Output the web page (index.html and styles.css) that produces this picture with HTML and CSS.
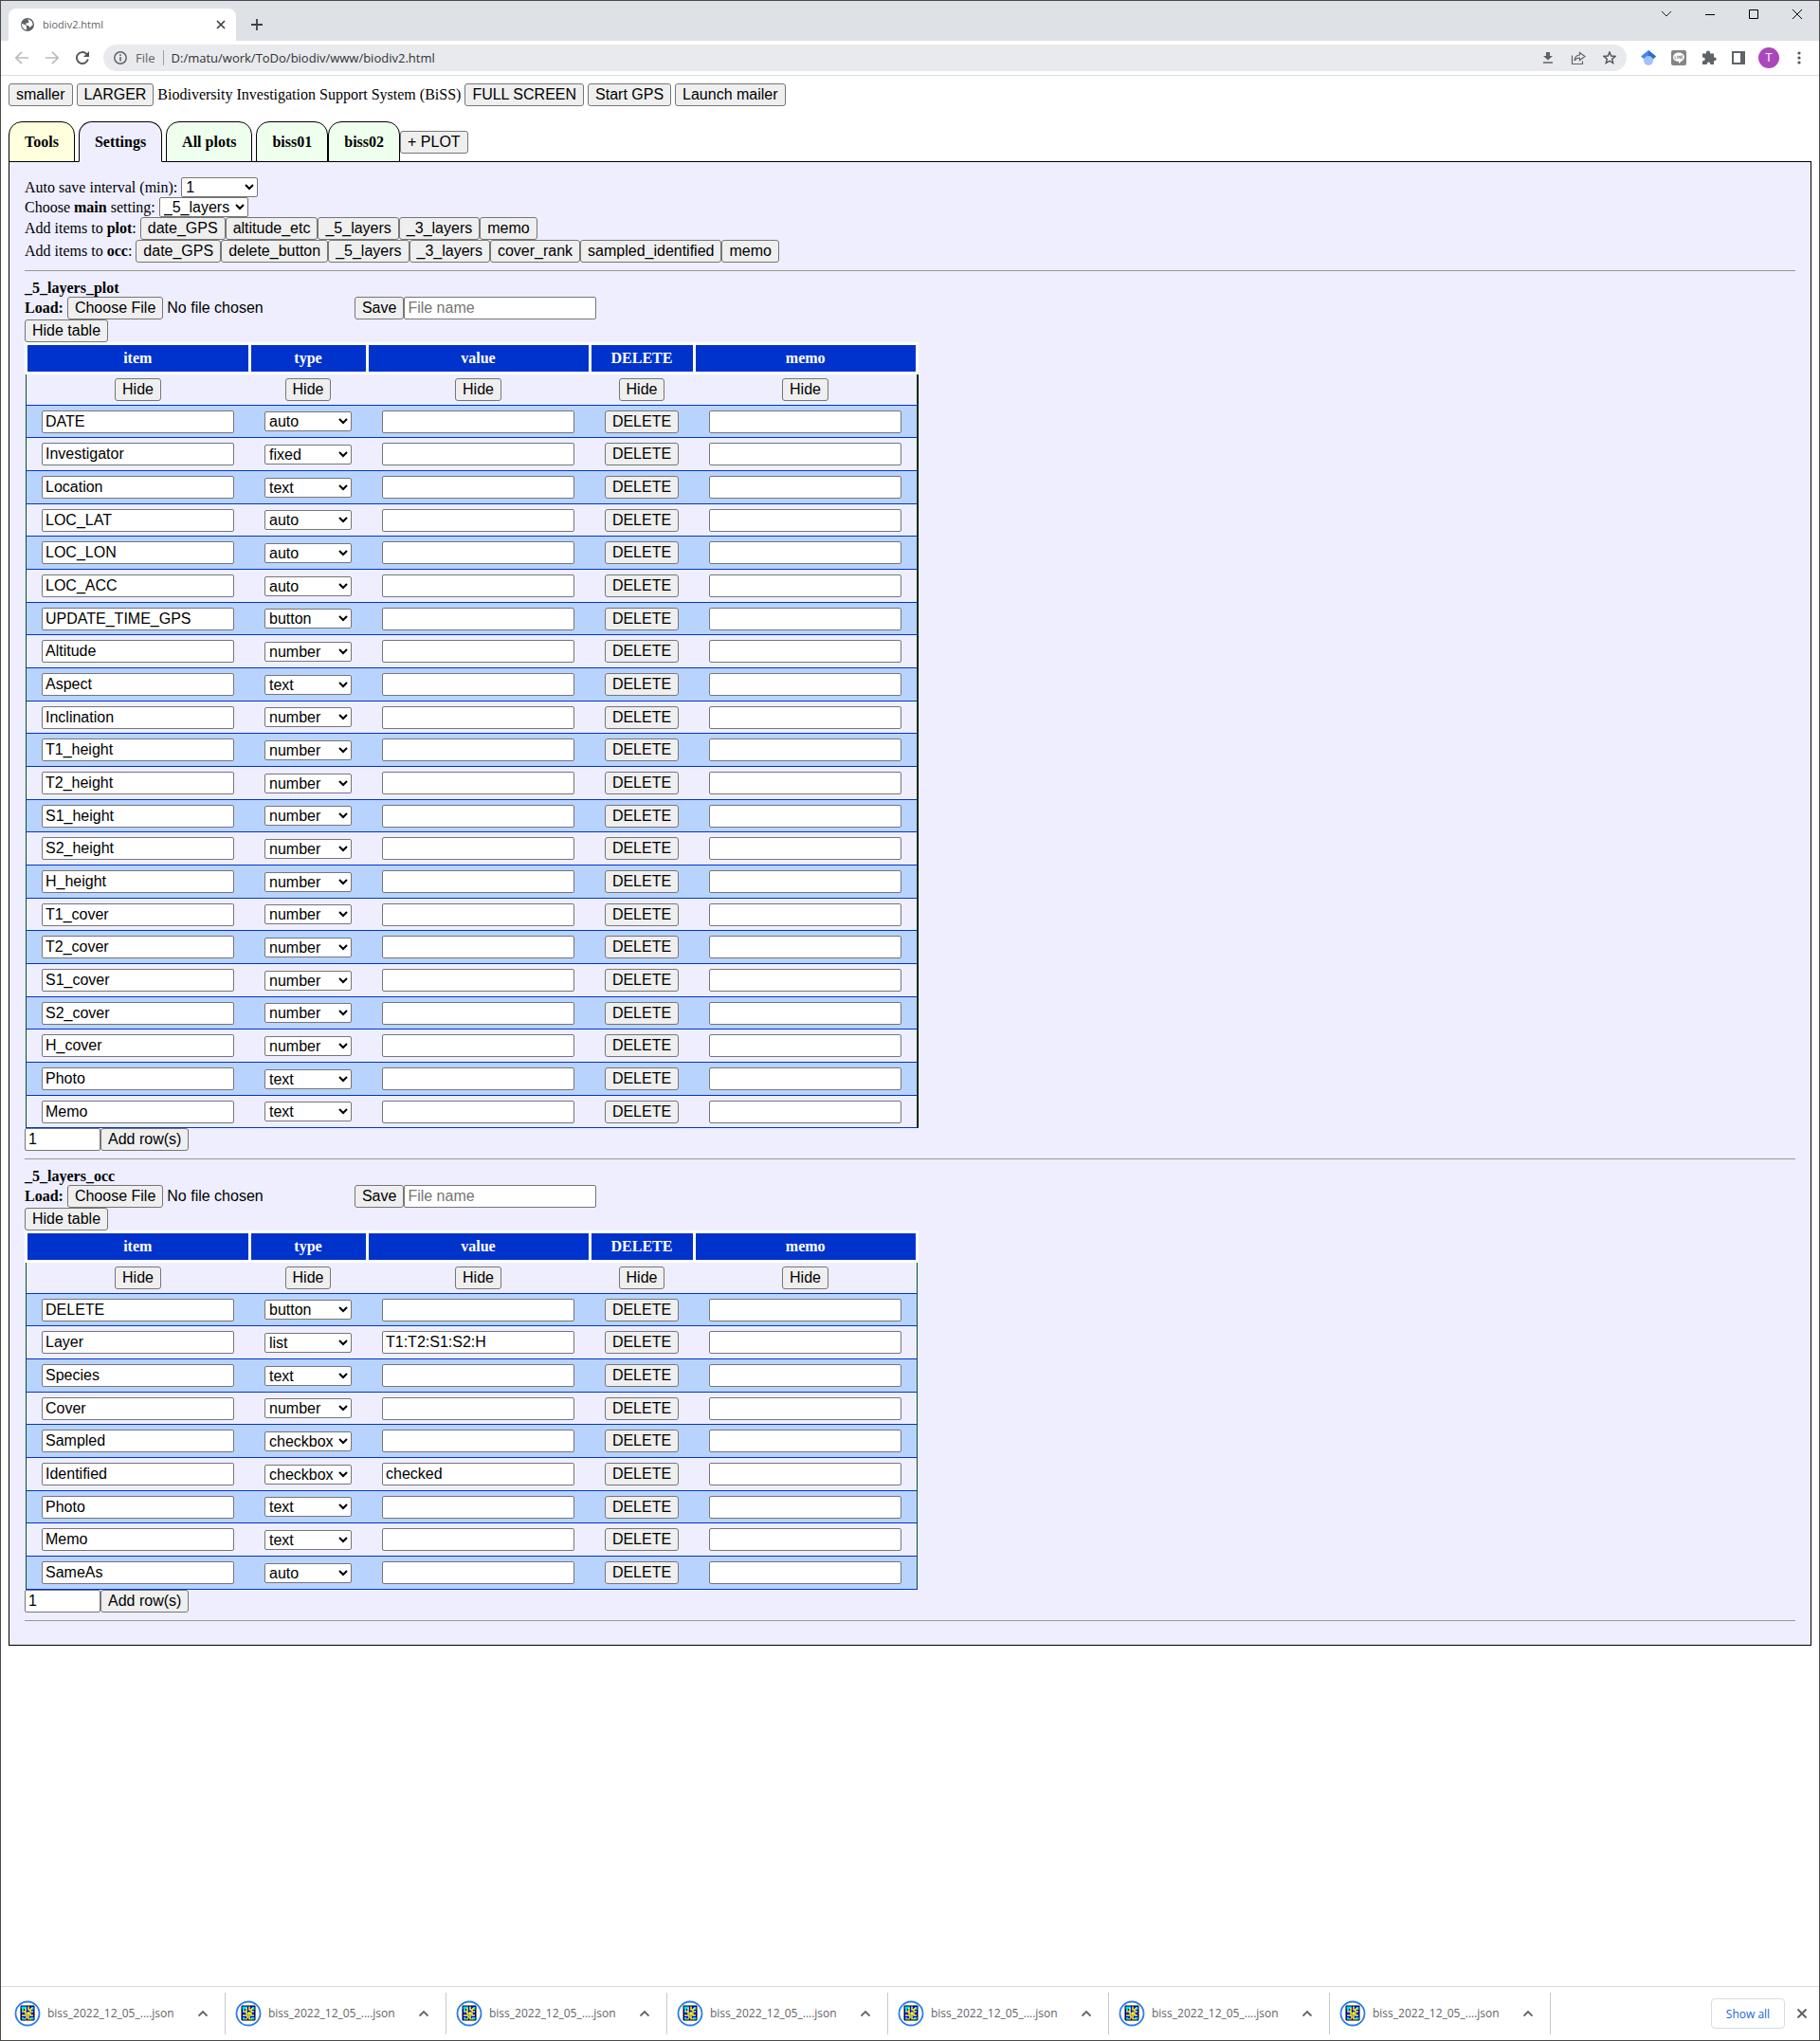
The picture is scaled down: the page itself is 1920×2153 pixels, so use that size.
FILE: index.html
```html
<!DOCTYPE html>
<html lang="en">
<head>
<meta charset="utf-8">
<title>biodiv2.html</title>
<link rel="stylesheet" href="styles.css">
</head>
<body>
<div class="window">
  <header class="chrome">
    <div class="tabstrip">
      <div class="browser-tab">
        <svg width="16" height="16" viewBox="0 0 16 16" aria-hidden="true"><circle cx="8" cy="8" r="7" fill="#5f6368"/><path d="M2 7l3 1 2 2v3.500C4 13 1.800 11 2 7zM8.500 2l4 2.500 1.200 3.500-3.200 3-1.500-2-3-.5.5-2 3-.5z" fill="#fff"/></svg>
        <span class="browser-tab-title">biodiv2.html</span>
        <button class="icon-button" aria-label="Close tab"><svg width="10" height="10" viewBox="0 0 10 10"><path d="M1 1l8 8M9 1l-8 8" stroke="#3c4043" stroke-width="1.700"/></svg></button>
      </div>
      <button class="icon-button" aria-label="New tab"><svg width="12" height="12" viewBox="0 0 12 12"><path d="M6 0v12M0 6h12" stroke="#3c4043" stroke-width="1.800"/></svg></button>
      <div class="window-controls">
        <button class="icon-button" aria-label="Search tabs"><svg width="10" height="10" viewBox="0 0 10 10"><path d="M0 2l5 5 5-5" fill="none" stroke="#222"/></svg></button>
        <button class="icon-button" aria-label="Minimize"><svg width="10" height="10" viewBox="0 0 10 10"><path d="M0 5.500h10" stroke="#000"/></svg></button>
        <button class="icon-button" aria-label="Maximize"><svg width="10" height="10" viewBox="0 0 10 10"><path d="M.5.5h9v9h-9z" fill="none" stroke="#000"/></svg></button>
        <button class="icon-button" aria-label="Close"><svg width="10" height="10" viewBox="0 0 10 10"><path d="M0 0l10 10M10 0L0 10" stroke="#000"/></svg></button>
      </div>
    </div>
    <div class="toolbar">
      <div class="nav-buttons">
        <button class="icon-button" aria-label="Back"><svg width="14" height="14" viewBox="0 0 14 14"><path d="M14 7H1M7 .8L.8 7 7 13.200" fill="none" stroke="#babcbe" stroke-width="1.700"/></svg></button>
        <button class="icon-button" aria-label="Forward"><svg width="14" height="14" viewBox="0 0 14 14"><path d="M0 7h13M7 .8L13.200 7 7 13.200" fill="none" stroke="#babcbe" stroke-width="1.700"/></svg></button>
        <button class="icon-button" aria-label="Reload"><svg width="14" height="14" viewBox="0 0 14 14"><path d="M12.800 8.500A6 6 0 1 1 11 2.600L12.500 4" fill="none" stroke="#505357" stroke-width="1.900"/><path d="M14 0v6H8z" fill="#505357"/></svg></button>
      </div>
      <div class="address">
        <svg width="14" height="14" viewBox="0 0 14 14" aria-hidden="true"><circle cx="7" cy="7" r="6.200" fill="none" stroke="#5f6368" stroke-width="1.500"/><path d="M7 6v4.500M7 3.200v1.700" stroke="#5f6368" stroke-width="1.600"/></svg>
        <span class="scheme">File</span>
        <input class="url" aria-label="Address" value="D:/matu/work/ToDo/biodiv/www/biodiv2.html">
        <div class="address-actions">
          <button class="icon-button" aria-label="Download"><svg width="12" height="12" viewBox="0 0 12 12"><path d="M4 0h4v4h3L6 8.500 1 4h3zM1 10.300h10v1.400H1z" fill="#5f6368"/></svg></button>
          <button class="icon-button" aria-label="Share"><svg width="16" height="16" viewBox="0 0 16 16"><path d="M1.500 5.500v9h11v-3M9.500 2.500l5.500 4-5.500 4V8C7 8 5.300 9 4 11c.3-3.500 2-5.800 5.500-6z" fill="none" stroke="#5f6368" stroke-width="1.200"/></svg></button>
          <button class="icon-button" aria-label="Bookmark"><svg width="14" height="14" viewBox="0 0 14 14"><path d="M7 1l1.700 4 4.300.4-3.300 2.800 1 4.300L7 10.200l-3.700 2.300 1-4.300L1 5.400 5.300 5z" fill="none" stroke="#505357" stroke-width="1.400"/></svg></button>
        </div>
      </div>
      <div class="extensions">
        <button class="icon-button" aria-label="Scholar"><svg width="16" height="16" viewBox="0 0 16 16"><path d="M8 0L0 6.500l3 2.500h10l3-2.500z" fill="#4285f4"/><path d="M8 0v7l5 2.500 3-3z" fill="#356ac3"/><circle cx="8" cy="11" r="5" fill="#a0c3ff"/></svg></button>
        <button class="icon-button" aria-label="LINE"><svg width="16" height="16" viewBox="0 0 16 16"><rect width="16" height="16" rx="2" fill="#858585"/><path d="M8 2.500c3.400 0 6 2.100 6 4.800 0 2.500-3.200 4.600-6 6.700v-2c-3.400 0-6-2-6-4.700s2.600-4.800 6-4.800z" fill="#fff"/><path d="M4 5.800v3h1.500M6.700 5.800v3M8 8.800v-3l1.600 3v-3M12.300 5.800h-1.500v3h1.500M10.800 7.300h1.300" fill="none" stroke="#858585" stroke-width=".8"/></svg></button>
        <button class="icon-button" aria-label="Extensions"><svg width="16" height="16" viewBox="0 0 16 16"><path d="M1 3.500h4c-.8-4 4.800-4 4 0h4v4c3.600-.4 3.600 4 0 3.600V15H9.300c.5-3.500-4-3.500-3.600 0H1v-3.700c3.600.4 3.600-4.200 0-3.800z" fill="#5f6368"/></svg></button>
        <button class="icon-button" aria-label="Side panel"><svg width="14" height="14" viewBox="0 0 14 14"><path d="M1 1h12v12H1z" fill="none" stroke="#5f6368" stroke-width="2"/><path d="M9 0h5v14H9z" fill="#5f6368"/></svg></button>
        <button class="avatar" aria-label="Profile">T</button>
        <button class="icon-button" aria-label="Menu"><svg width="14" height="14" viewBox="0 0 14 14"><g fill="#505357"><circle cx="7" cy="2" r="1.600"/><circle cx="7" cy="7" r="1.600"/><circle cx="7" cy="12" r="1.600"/></g></svg></button>
      </div>
    </div>
  </header>

  <main class="page">
    <div class="top-actions">
      <button class="btn">smaller</button>
      <button class="btn">LARGER</button>
      <span>Biodiversity Investigation Support System (BiSS)</span>
      <button class="btn">FULL SCREEN</button>
      <button class="btn">Start GPS</button>
      <button class="btn">Launch mailer</button>
    </div>
    <nav class="tabs">
      <a class="tab tab-tools" href="#tools">Tools</a>
      <a class="tab tab-current" href="#settings">Settings</a>
      <a class="tab" href="#all">All plots</a>
      <div class="plot-tabs">
        <a class="tab" href="#biss01">biss01</a>
        <a class="tab" href="#biss02">biss02</a>
        <button class="btn">+ PLOT</button>
      </div>
    </nav>
    <section class="panel" id="settings">
      <div class="line">
        <label for="interval">Auto save interval (min):</label>
        <select class="select interval" id="interval"><option>1</option></select>
      </div>
      <div class="line">
        <label for="main-setting">Choose <b>main</b> setting:</label>
        <select class="select main-setting" id="main-setting"><option>_5_layers</option></select>
      </div>
      <div class="line">
        <span>Add items to <b>plot</b>:</span>
        <div class="joined"><button class="btn">date_GPS</button><button class="btn">altitude_etc</button><button class="btn">_5_layers</button><button class="btn">_3_layers</button><button class="btn">memo</button></div>
      </div>
      <div class="line">
        <span>Add items to <b>occ</b>:</span>
        <div class="joined"><button class="btn">date_GPS</button><button class="btn">delete_button</button><button class="btn">_5_layers</button><button class="btn">_3_layers</button><button class="btn">cover_rank</button><button class="btn">sampled_identified</button><button class="btn">memo</button></div>
      </div>
      <hr>
      <div class="setting" data-name="plot"></div>
      <hr>
      <div class="setting" data-name="occ"></div>
      <hr>
    </section>
  </main>

  <footer class="downloads">
    <div class="download-list"></div>
    <button class="show-all">Show all</button>
    <button class="icon-button" aria-label="Close downloads"><svg width="10" height="10" viewBox="0 0 10 10"><path d="M.5.5l9 9M9.500.5l-9 9" stroke="#5f6368" stroke-width="2"/></svg></button>
  </footer>
</div>
<script src="app.js"></script>
</body>
</html>
```

FILE: styles.css
```css
* { box-sizing: border-box; }
body {
  margin: 0;
  font: 16px/18px "Liberation Serif", serif;
  color: #000;
  background: #fff;
}
.window {
  display: flex;
  flex-direction: column;
  min-height: 100vh;
  border: 1px solid #4a4a48;
}
button, input, select { font-family: "Liberation Sans", sans-serif; font-size: 16px; }
.icon-button {
  display: flex;
  align-items: center;
  justify-content: center;
  flex: none;
  padding: 0;
  border: 0;
  background: none;
}

/* browser frame */
.chrome { font-family: "Open Sans", sans-serif; border-bottom: 1px solid #dadce0; }
.tabstrip { display: flex; height: 42px; padding: 8px 0 0 8px; background: #dee1e6; }
.browser-tab {
  display: flex;
  align-items: center;
  gap: 8px;
  width: 240px;
  padding: 0 11px 0 12px;
  background: #fff;
  border-radius: 8px 8px 0 0;
  margin-right: 16px;
}
.browser-tab-title { flex: 1; font-size: 11px; color: #5f6368; }
.window-controls { display: flex; align-items: flex-start; gap: 36px; margin-left: auto; padding: 1px 18px 0 0; }
.toolbar { display: flex; align-items: center; height: 36px; padding: 0 14px 0 15px; }
.nav-buttons { display: flex; gap: 18px; width: 93px; }
.address {
  display: flex;
  align-items: center;
  flex: 1;
  height: 28px;
  padding: 0 11px;
  border-radius: 14px;
  background: #e9eaed;
}
.scheme { margin: 0 8px 0 9px; padding-right: 8px; border-right: 1px solid #9aa0a6; font-size: 13px; color: #5f6368; line-height: 16px; }
.url { flex: 1; min-width: 0; padding: 0; border: 0; background: none; font-family: "Open Sans", sans-serif; font-size: 13px; color: #303134; }
.address-actions { display: flex; align-items: center; gap: 18px; }
.extensions { display: flex; align-items: center; gap: 16px; margin-left: 15px; }
.avatar {
  width: 22px;
  height: 22px;
  margin: 0 -2px;
  padding: 0;
  border: 0;
  border-radius: 11px;
  background: #ab47bc;
  color: #fff;
  font-size: 12px;
}

/* page */
.page { flex: 1; padding: 8px; }
.btn {
  height: 24px;
  padding: 0 7px;
  border: 1px solid #767676;
  border-radius: 3px;
  background: #efefef;
  color: #000;
  line-height: 22px;
  white-space: nowrap;
}
.top-actions { display: flex; align-items: center; gap: 4px; margin-bottom: 16px; }
.tabs { display: flex; gap: 4px; }
.plot-tabs { display: flex; align-items: center; }
.tab {
  height: 43px;
  padding: 0 16px;
  border: 1px solid #000;
  border-radius: 14px 14px 0 0;
  background: #efe;
  color: #000;
  font-weight: bold;
  line-height: 42px;
  text-decoration: none;
}
.tab-tools { background: #ffd; }
.tab-current { background: #eef; border-bottom-color: #eef; z-index: 1; }
.panel { margin-top: -1px; padding: 16px; border: 1px solid #000; background: #eef; }
.line { display: flex; align-items: center; gap: 4px; }
.joined { display: flex; }
.select {
  height: 21px;
  padding: 0;
  border: 1px solid #767676;
  border-radius: 2px;
  background-color: #fff;
  color: #000;
}
.interval { width: 81px; }
.main-setting { width: 94px; }
hr { height: 2px; margin: 8px 0; border: 0; border-top: 1px solid #999; border-bottom: 1px solid #eee; }
.name { font-weight: bold; }
.file { width: 299px; height: 24px; line-height: 22px; }
.file::file-selector-button {
  height: 24px;
  margin: 0 4px 0 0;
  padding: 0 7px;
  border: 1px solid #767676;
  border-radius: 3px;
  background: #efefef;
  font: 16px "Liberation Sans", sans-serif;
}
.text {
  display: block;
  width: 203px;
  height: 24px;
  padding: 0 3px;
  border: 1px solid #767676;
  border-radius: 2px;
  background: #fff;
  color: #000;
}
.text::placeholder { color: #757575; }
.count { width: 80px; }
.toggle { display: block; }

.table-wrap { width: fit-content; }
.table-wrap-plot { border-right: 1px solid #000; }
.table-wrap-plot .items { margin-right: -1px; }
.items { border-collapse: collapse; }
.items th {
  height: 31px;
  padding: 0;
  border: 3px solid #fff;
  background: #03c;
  color: #fff;
}
.items td {
  height: 35px;
  padding: 0 16px;
  border-bottom: 1px solid #03c;
  text-align: center;
}
.items td:first-child { border-left: 1px solid #054d33; }
.items td:last-child { border-right: 1px solid #054d33; }
.items tr:nth-child(3n+2) td,
.items tr:first-child td { height: 34px; }
.items tbody tr:nth-child(even) { background: #b9d3ff; }
.items td > * { vertical-align: middle; }
.items td .select { display: block; width: 92px; }
.items td .delete { display: block; width: 78px; padding: 0; }

/* downloads shelf */
.downloads {
  display: flex;
  align-items: center;
  height: 57px;
  padding-right: 13px;
  border-top: 1px solid #dadce0;
  font-family: "Open Sans", sans-serif;
}
.download-list { display: flex; flex: 1; min-width: 0; padding-left: 4px; }
.download {
  display: flex;
  align-items: center;
  width: 233px;
  height: 44px;
  padding: 0 18px 0 10px;
  border-right: 1px solid #c8c9cc;
}
.download-name { flex: 1; margin-left: 7px; font-size: 12px; color: #5f6368; white-space: nowrap; }
.show-all {
  width: 78px;
  height: 32px;
  margin-right: 13px;
  padding: 0;
  border: 1px solid #dadce0;
  border-radius: 4px;
  background: #fff;
  color: #1a66e0;
  font-family: "Open Sans", sans-serif;
  font-size: 12px;
  font-weight: 500;
}
```

FILE: app.js
```js
const settings = {
  plot: [
    ["DATE", "auto"], ["Investigator", "fixed"], ["Location", "text"],
    ["LOC_LAT", "auto"], ["LOC_LON", "auto"], ["LOC_ACC", "auto"],
    ["UPDATE_TIME_GPS", "button"], ["Altitude", "number"], ["Aspect", "text"],
    ["Inclination", "number"], ["T1_height", "number"], ["T2_height", "number"],
    ["S1_height", "number"], ["S2_height", "number"], ["H_height", "number"],
    ["T1_cover", "number"], ["T2_cover", "number"], ["S1_cover", "number"],
    ["S2_cover", "number"], ["H_cover", "number"], ["Photo", "text"], ["Memo", "text"]
  ],
  occ: [
    ["DELETE", "button"], ["Layer", "list", "T1:T2:S1:S2:H"], ["Species", "text"],
    ["Cover", "number"], ["Sampled", "checkbox"], ["Identified", "checkbox", "checked"],
    ["Photo", "text"], ["Memo", "text"], ["SameAs", "auto"]
  ]
};
const columns = ["item", "type", "value", "DELETE", "memo"];

const row = ([item, type, value = ""]) => `<tr>
  <td><input class="text" aria-label="item" value="${item}"></td>
  <td><select class="select" aria-label="type"><option>${type}</option></select></td>
  <td><input class="text" aria-label="value" value="${value}"></td>
  <td><button class="btn delete">DELETE</button></td>
  <td><input class="text" aria-label="memo"></td></tr>`;

document.querySelectorAll(".setting").forEach(el => {
  const name = el.dataset.name;
  el.innerHTML = `
    <div class="name">_5_layers_${name}</div>
    <div class="line">
      <label for="load-${name}"><b>Load:</b></label>
      <input type="file" class="file" id="load-${name}">
      <div class="joined"><button class="btn">Save</button><input class="text" aria-label="File name" placeholder="File name"></div>
    </div>
    <button class="btn toggle">Hide table</button>
    <div class="table-wrap table-wrap-${name}">
      <table class="items">
        <thead><tr>${columns.map(c => `<th>${c}</th>`).join("")}</tr></thead>
        <tbody>
          <tr>${columns.map(() => `<td><button class="btn">Hide</button></td>`).join("")}</tr>
          ${settings[name].map(row).join("")}
        </tbody>
      </table>
    </div>
    <div class="joined"><input class="text count" aria-label="Number of rows" value="1"><button class="btn">Add row(s)</button></div>`;
});

const fileIcon = `<svg width="28" height="28" viewBox="0 0 28 28" aria-hidden="true">
  <circle cx="14" cy="14" r="12.500" fill="#fff" stroke="#2b7de9" stroke-width="1.800"/>
  <path d="M7 6h14v15H7z" fill="#00f"/><path d="M7 6h6v3H7zM8 9h2v2H8zM17 18h4v3h-4zM18 7h3v3h-3zM8 18h2v3H8z" fill="#0df"/>
  <path d="M15 6v4h2v2h3M8 12h4v2h5v2h3M8 16h5v3M15 12v8h3M10 20h3M12 8v6M17 9h2" fill="none" stroke="#ff0" stroke-width="1.500"/>
  <path d="M7 6h14v15H7z" fill="none" stroke="#000"/></svg>`;
document.querySelector(".download-list").innerHTML = Array(7).fill(`<div class="download">${fileIcon}
  <span class="download-name">biss_2022_12_05_....json</span>
  <button class="icon-button" aria-label="Download options"><svg width="10" height="8" viewBox="0 0 10 8"><path d="M.5 6.500L5 2l4.500 4.500" fill="none" stroke="#5f6368" stroke-width="1.800"/></svg></button>
</div>`).join("");
```
